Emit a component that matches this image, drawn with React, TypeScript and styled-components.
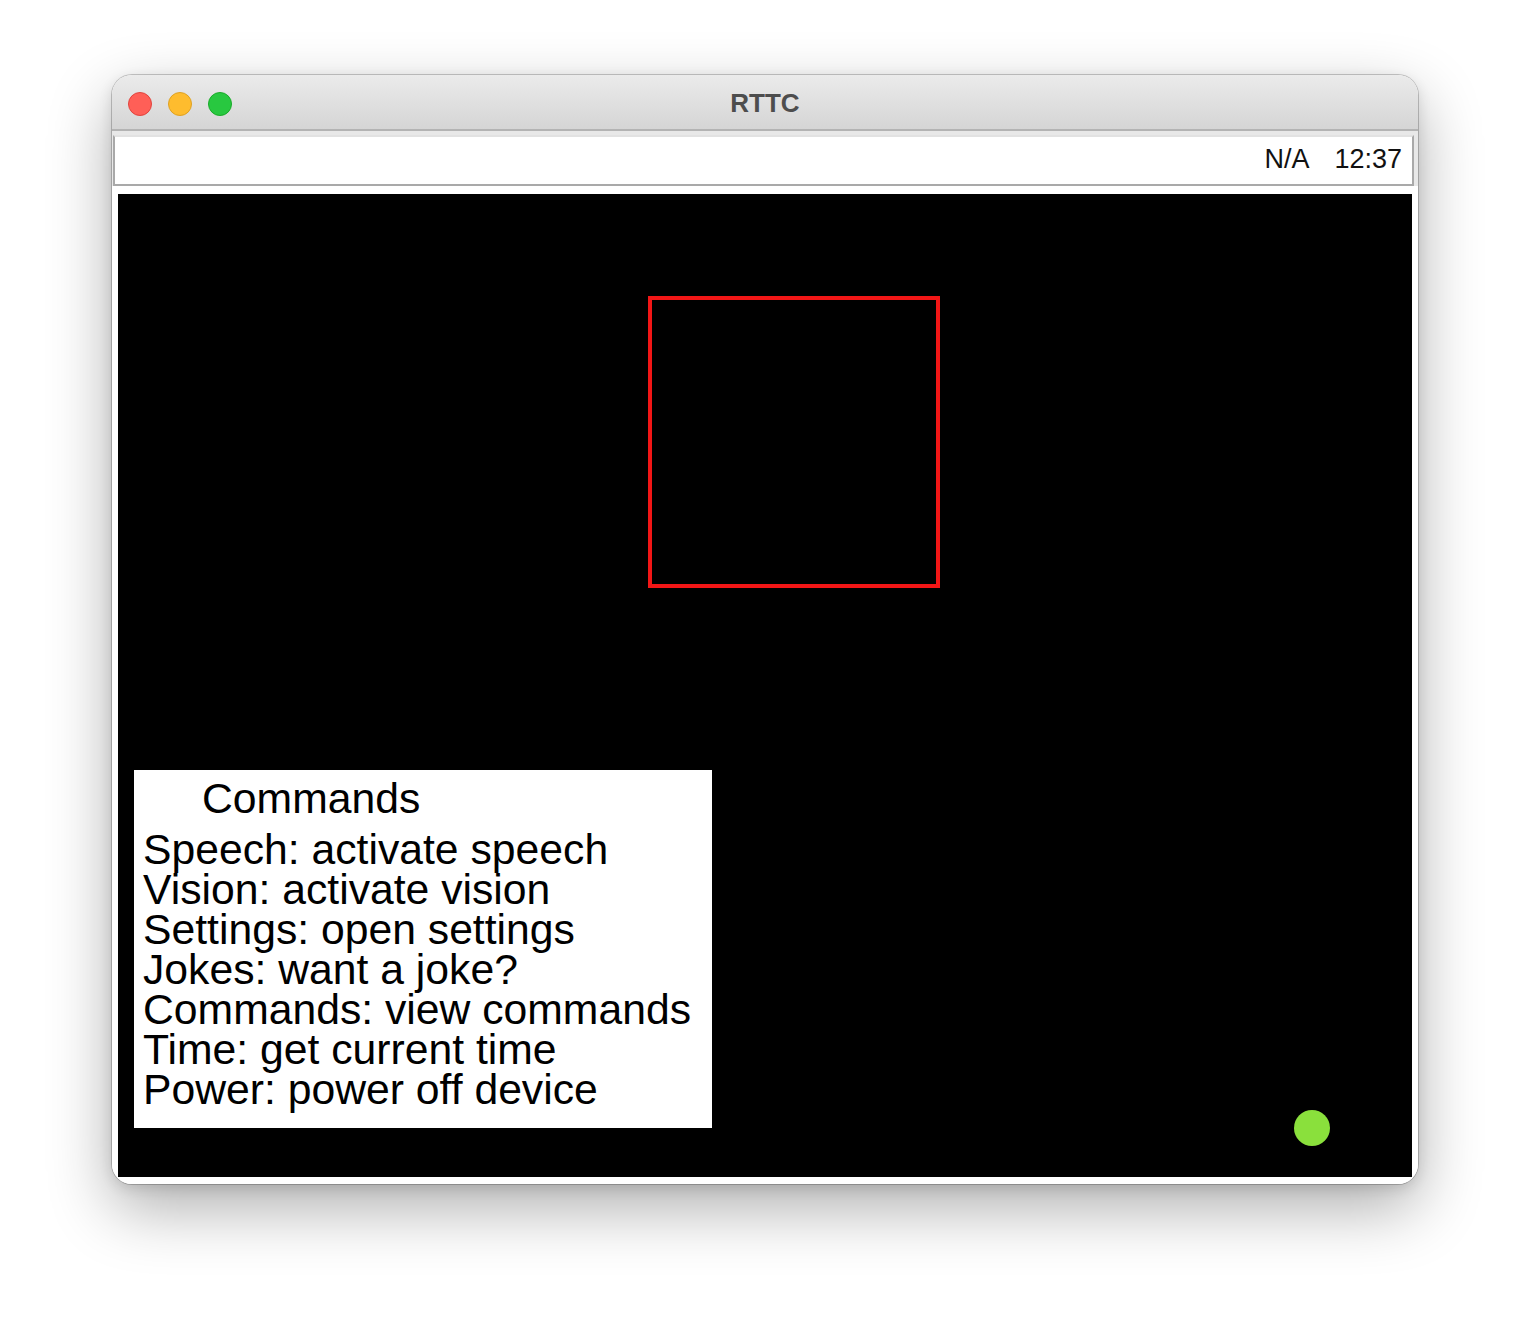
import React from "react";
import styled, { createGlobalStyle } from "styled-components";

const Global = createGlobalStyle`
  html, body { margin: 0; padding: 0; background: #ffffff; }
  body { font-family: "Liberation Sans", Arial, sans-serif; }
`;

const Page = styled.div`
  width: 1530px;
  height: 1332px;
  padding: 75px 0 0 112px;
  box-sizing: border-box;
  background: #ffffff;
`;

const Window = styled.div`
  width: 1306px;
  height: 1109px;
  border-radius: 20px;
  overflow: hidden;
  display: flex;
  flex-direction: column;
  background: #ffffff;
  box-shadow: 0 0 0 1px rgba(0, 0, 0, 0.2), 0 24px 64px rgba(0, 0, 0, 0.32),
    0 4px 14px rgba(0, 0, 0, 0.12);
`;

const TitleBar = styled.div`
  height: 56px;
  flex: none;
  box-sizing: border-box;
  position: relative;
  display: flex;
  align-items: center;
  justify-content: center;
  background: linear-gradient(#ebebeb, #d5d5d5);
  border-bottom: 2px solid #b3b3b3;
`;

const Lights = styled.div`
  position: absolute;
  left: 16px;
  top: 17px;
  display: flex;
  gap: 16px;
`;

const Light = styled.span<{ $c: string; $b: string }>`
  width: 24px;
  height: 24px;
  border-radius: 50%;
  box-sizing: border-box;
  background: ${(p) => p.$c};
  border: 1px solid ${(p) => p.$b};
`;

const Title = styled.div`
  font-family: "Liberation Sans", Arial, sans-serif;
  font-weight: bold;
  font-size: 26px;
  color: #4d4d4d;
  margin-top: 2px;
`;

const StatusStrip = styled.div`
  flex: none;
  background: #e8e8e8;
  padding: 4px 4px 0 1px;
`;

const StatusBox = styled.div`
  height: 51px;
  box-sizing: border-box;
  background: #ffffff;
  border-left: 2px solid #a9a9a9;
  border-right: 2px solid #a9a9a9;
  border-bottom: 2px solid #a9a9a9;
  border-top: 2px solid #e2e2e2;
  display: flex;
  align-items: center;
  justify-content: flex-end;
  gap: 25px;
  padding: 0 10px 2px 0;
  font-family: "Liberation Sans", Arial, sans-serif;
  font-size: 27px;
  color: #111111;
`;

const Body = styled.div`
  flex: 1;
  background: #ffffff;
  padding: 8px 6px 7px 6px;
  display: flex;
`;

const Screen = styled.div`
  flex: 1;
  position: relative;
  background: #000000;
  display: flex;
  flex-direction: column;
  justify-content: flex-end;
  align-items: flex-start;
  padding: 0 0 49px 16px;
`;

const Target = styled.div`
  position: absolute;
  left: 530px;
  top: 102px;
  width: 292px;
  height: 292px;
  box-sizing: border-box;
  border: 4px solid #f21616;
`;

const Commands = styled.div`
  width: 578px;
  height: 358px;
  box-sizing: border-box;
  background: #ffffff;
  padding: 8px 8px 0 9px;
  font-family: "Liberation Sans", Arial, sans-serif;
  font-size: 42.7px;
  line-height: 40px;
  color: #000000;
`;

const CommandsTitle = styled.div`
  padding-left: 59px;
  margin-bottom: 11px;
`;

const CommandLine = styled.div`
  white-space: nowrap;
`;

const Indicator = styled.span`
  position: absolute;
  left: 1176px;
  top: 916px;
  width: 36px;
  height: 36px;
  border-radius: 50%;
  background: #8ae03c;
`;

const commands = [
  "Speech: activate speech",
  "Vision: activate vision",
  "Settings: open settings",
  "Jokes: want a joke?",
  "Commands: view commands",
  "Time: get current time",
  "Power: power off device",
];

export default function App() {
  return (
    <>
      <Global />
      <Page>
        <Window>
          <TitleBar>
            <Lights>
              <Light $c="#ff5f57" $b="#e0443e" />
              <Light $c="#febc2e" $b="#dea123" />
              <Light $c="#28c840" $b="#1aab29" />
            </Lights>
            <Title>RTTC</Title>
          </TitleBar>
          <StatusStrip>
            <StatusBox>
              <span>N/A</span>
              <span>12:37</span>
            </StatusBox>
          </StatusStrip>
          <Body>
            <Screen>
              <Target />
              <Commands>
                <CommandsTitle>Commands</CommandsTitle>
                {commands.map((c) => (
                  <CommandLine key={c}>{c}</CommandLine>
                ))}
              </Commands>
              <Indicator />
            </Screen>
          </Body>
        </Window>
      </Page>
    </>
  );
}
